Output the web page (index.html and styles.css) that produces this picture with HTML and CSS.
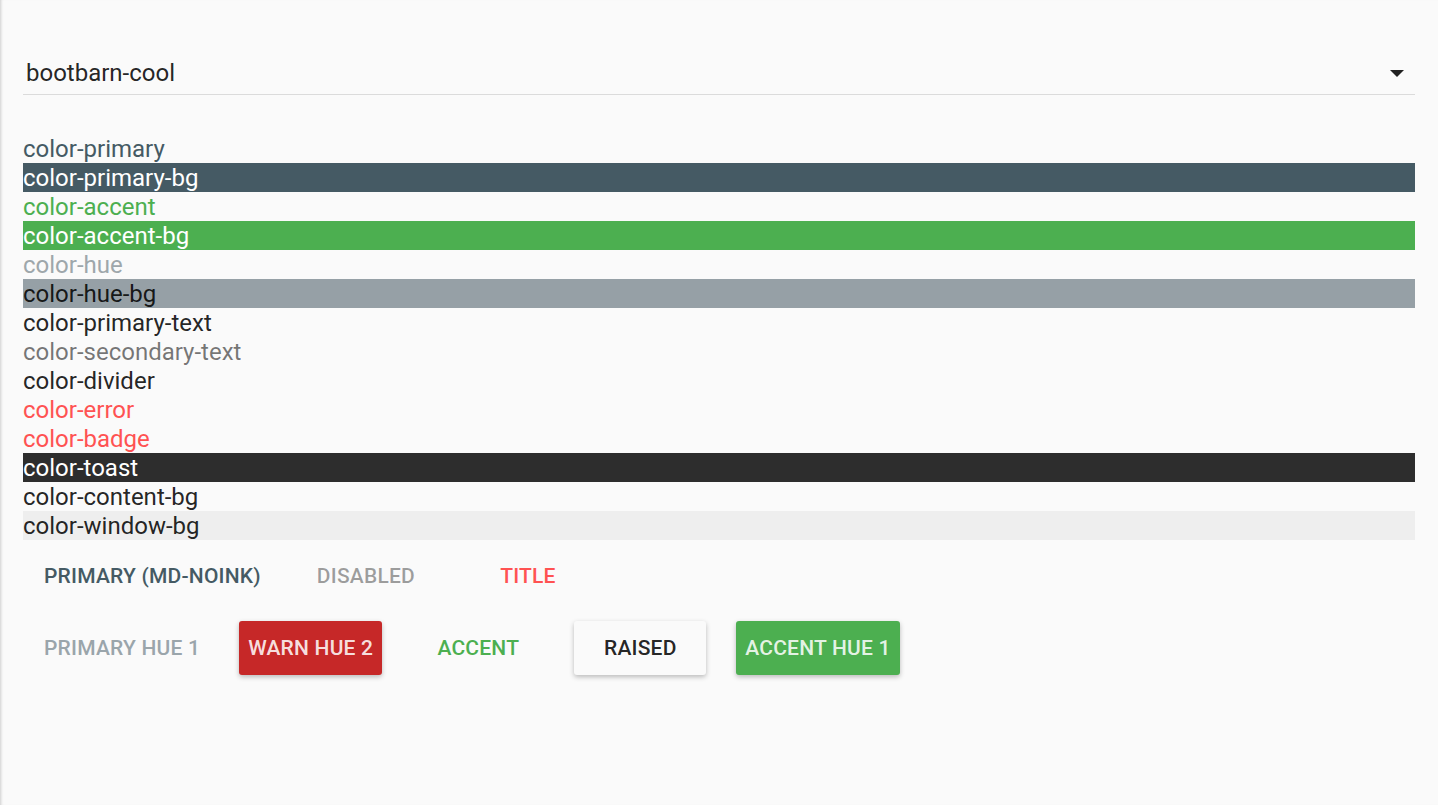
FILE: index.html
```html
<!DOCTYPE html>
<html lang="en">
<head>
<meta charset="utf-8">
<title>Theme colors</title>
<link rel="stylesheet" href="styles.css">
</head>
<body>
<div class="page">
  <div class="select">
    <span class="select-value">bootbarn-cool</span>
    <span class="select-arrow"></span>
  </div>

  <div class="swatches">
    <div class="row c-primary">color-primary</div>
    <div class="row c-primary-bg">color-primary-bg</div>
    <div class="row c-accent">color-accent</div>
    <div class="row c-accent-bg">color-accent-bg</div>
    <div class="row c-hue">color-hue</div>
    <div class="row c-hue-bg">color-hue-bg</div>
    <div class="row c-primary-text">color-primary-text</div>
    <div class="row c-secondary-text">color-secondary-text</div>
    <div class="row c-divider">color-divider</div>
    <div class="row c-error">color-error</div>
    <div class="row c-badge">color-badge</div>
    <div class="row c-toast">color-toast</div>
    <div class="row c-content-bg">color-content-bg</div>
    <div class="row c-window-bg">color-window-bg</div>
  </div>

  <div class="buttons">
    <button class="btn btn-primary">Primary (md-noink)</button>
    <button class="btn btn-disabled">Disabled</button>
    <button class="btn btn-title">Title</button>
  </div>
  <div class="buttons">
    <button class="btn btn-hue1">Primary Hue 1</button>
    <button class="btn btn-raised btn-warn">Warn Hue 2</button>
    <button class="btn btn-accent">Accent</button>
    <button class="btn btn-raised btn-plain">Raised</button>
    <button class="btn btn-raised btn-accent-raised">Accent Hue 1</button>
  </div>
</div>
</body>
</html>
```

FILE: styles.css
```css
html, body {
  margin: 0;
  padding: 0;
  background: #fafafa;
}

body {
  font-family: Roboto, "Liberation Sans", Arial, sans-serif;
  color: rgba(0, 0, 0, 0.87);
}

.page {
  min-height: 100vh;
  box-sizing: border-box;
  padding: 58px 23px 0 23px;
  box-shadow: inset 3px 0 3px -2px rgba(0, 0, 0, 0.18);
}

.select {
  display: flex;
  align-items: center;
  justify-content: space-between;
  height: 30px;
  padding-bottom: 6px;
  border-bottom: 1px solid rgba(0, 0, 0, 0.12);
}

.select-value {
  font-size: 24px;
  line-height: 30px;
  padding-left: 3px;
  color: rgba(0, 0, 0, 0.87);
}

.select-arrow {
  width: 0;
  height: 0;
  border-left: 7px solid transparent;
  border-right: 7px solid transparent;
  border-top: 7px solid rgba(0, 0, 0, 0.87);
  margin-right: 11px;
  margin-top: 1px;
}

.swatches {
  margin-top: 39px;
}

.row {
  box-sizing: border-box;
  font-size: 24px;
  height: 29px;
  padding-top: 1px;
  line-height: 28px;
  white-space: nowrap;
}

.c-primary { color: #455a64; }
.c-primary-bg { background: #455a64; color: #ffffff; }
.c-accent { color: #4caf50; }
.c-accent-bg { background: #4caf50; color: #ffffff; }
.c-hue { color: #9ea7ab; }
.c-hue-bg { background: #96a0a6; color: rgba(0, 0, 0, 0.87); }
.c-primary-text { color: rgba(0, 0, 0, 0.87); }
.c-secondary-text { color: rgba(0, 0, 0, 0.54); }
.c-divider { color: rgba(0, 0, 0, 0.87); }
.c-error { color: #ff5252; }
.c-badge { color: #ff5252; }
.c-toast { background: #2d2d2d; color: #ffffff; }
.c-content-bg { background: #fafafa; }
.c-window-bg { background: #eeeeee; }

.buttons {
  display: flex;
  align-items: center;
  column-gap: 6px;
}

.btn {
  display: block;
  flex: none;
  box-sizing: border-box;
  min-width: 132px;
  height: 54px;
  line-height: 54px;
  margin: 9px 12px;
  padding: 0 9px;
  border: 0;
  border-radius: 3px;
  background: transparent;
  font-family: Roboto, "Liberation Sans", Arial, sans-serif;
  font-size: 21px;
  font-weight: 500;
  letter-spacing: 0.01em;
  text-transform: uppercase;
  text-align: center;
  white-space: nowrap;
  cursor: pointer;
}

.btn-primary { color: #455a64; }
.btn-disabled { color: rgba(0, 0, 0, 0.38); cursor: default; }
.btn-title { color: #ff5252; }
.btn-hue1 { color: #9aa5ab; }
.btn-accent { color: #4caf50; }

.btn-raised {
  box-shadow: 0 2px 5px 0 rgba(0, 0, 0, 0.26);
}

.btn-warn {
  background: #c62828;
  color: rgba(255, 255, 255, 0.87);
}

.btn-plain {
  background: #fafafa;
  color: rgba(0, 0, 0, 0.87);
}

.btn-accent-raised {
  background: #4caf50;
  color: rgba(255, 255, 255, 0.87);
}
```
